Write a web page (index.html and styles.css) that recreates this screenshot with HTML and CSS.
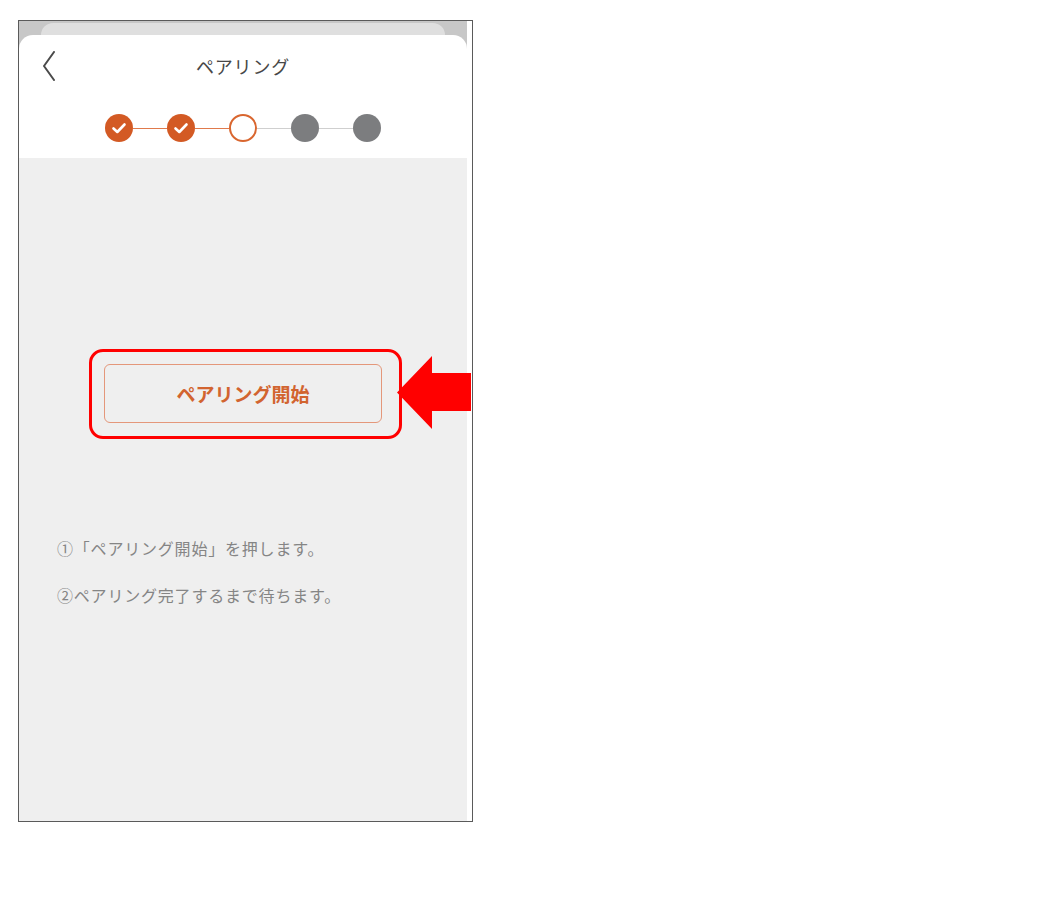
FILE: index.html
```html
<!DOCTYPE html>
<html lang="ja">
<head>
<meta charset="utf-8">
<title>ペアリング</title>
<link rel="stylesheet" href="styles.css">
</head>
<body>
<div class="frame">
  <div class="phone">
    <div class="statusbar"><div class="behind-card"></div></div>
    <div class="sheet">
      <div class="nav">
        <svg class="back" width="14" height="30" viewBox="0 0 14 30"><path d="M12 1 L2 15 L12 29" fill="none" stroke="#4a4a4a" stroke-width="2" stroke-linecap="round" stroke-linejoin="round"/></svg>
        <div class="title">ペアリング</div>
        <div class="spacer"></div>
      </div>
      <div class="steps">
        <span class="dot done"><svg width="28" height="28" viewBox="0 0 28 28"><path d="M8.5 14.5 L12.3 18 L19.5 10.5" fill="none" stroke="#fff" stroke-width="2.6" stroke-linecap="round" stroke-linejoin="round"/></svg></span>
        <span class="line on"></span>
        <span class="dot done"><svg width="28" height="28" viewBox="0 0 28 28"><path d="M8.5 14.5 L12.3 18 L19.5 10.5" fill="none" stroke="#fff" stroke-width="2.6" stroke-linecap="round" stroke-linejoin="round"/></svg></span>
        <span class="line on"></span>
        <span class="dot current"></span>
        <span class="line"></span>
        <span class="dot todo"></span>
        <span class="line"></span>
        <span class="dot todo"></span>
      </div>
    </div>
    <div class="content">
      <div class="highlight">
        <div class="start-btn">ペアリング開始</div>
      </div>
      <div class="notes">
        <p>①「ペアリング開始」を押します。</p>
        <p>②ペアリング完了するまで待ちます。</p>
      </div>
    </div>
  </div>
  <div class="gutter"></div>
  <svg class="arrow" width="74" height="73" viewBox="0 0 74 73"><polygon points="0,36.5 35,0 35,17 74,17 74,55 35,55 35,73" fill="#ff0000"/></svg>
</div>
</body>
</html>
```
FILE: styles.css
```css
* { box-sizing: border-box; }
html, body { margin: 0; padding: 0; background: #fff; }
body {
  font-family: "Noto Sans CJK JP", "Noto Sans", sans-serif;
  padding: 20px 0 0 18px;
}
.frame {
  position: relative;
  width: 455px;
  height: 802px;
  border: 1px solid #5a5a5a;
  display: flex;
  background: #fff;
}
.phone {
  width: 448px;
  display: flex;
  flex-direction: column;
  background: #c7c7c7;
}
.gutter { flex: 1; background: #fff; }
.statusbar {
  height: 14px;
  padding: 2px 22px 0 22px;
}
.behind-card {
  height: 12px;
  background: #dfdfdf;
  border-radius: 14px 14px 0 0;
}
.sheet {
  height: 123px;
  background: #fff;
  border-radius: 14px 14px 0 0;
  padding-top: 16px;
}
.nav {
  display: grid;
  grid-template-columns: 60px 1fr 60px;
  align-items: center;
  height: 30px;
}
.back { margin-left: 23px; display: block; }
.title {
  text-align: center;
  font-size: 18px;
  color: #474747;
  letter-spacing: 0.8px;
  line-height: 30px;
}
.steps {
  margin-top: 33px;
  display: flex;
  justify-content: center;
  align-items: center;
  height: 28px;
}
.dot {
  width: 28px;
  height: 28px;
  border-radius: 50%;
  display: block;
}
.dot svg { display: block; }
.dot.done { background: #d35a24; }
.dot.current { background: #fff; border: 2px solid #d9662f; }
.dot.todo { background: #7c7d7f; }
.line { width: 34px; height: 1px; background: #cfcfcf; }
.line.on { background: #e07a4c; }
.content {
  flex: 1;
  background: #efefef;
  padding-top: 191px;
}
.highlight {
  margin-left: 70px;
  width: 313px;
  height: 90px;
  border: 3px solid #ff0000;
  border-radius: 14px;
  padding: 12px 17px 0 12px;
}
.start-btn {
  height: 59px;
  border: 1.5px solid #e4977a;
  border-radius: 6px;
  display: flex;
  align-items: center;
  justify-content: center;
  color: #d2642f;
  font-size: 19px;
  font-weight: bold;
}
.notes {
  margin-top: 97px;
  padding-left: 38px;
}
.notes p {
  margin: 0 0 23px 0;
  font-size: 16px;
  line-height: 24px;
  letter-spacing: 0.8px;
  color: #858585;
}
.arrow {
  position: absolute;
  left: 378px;
  top: 335px;
}
```
